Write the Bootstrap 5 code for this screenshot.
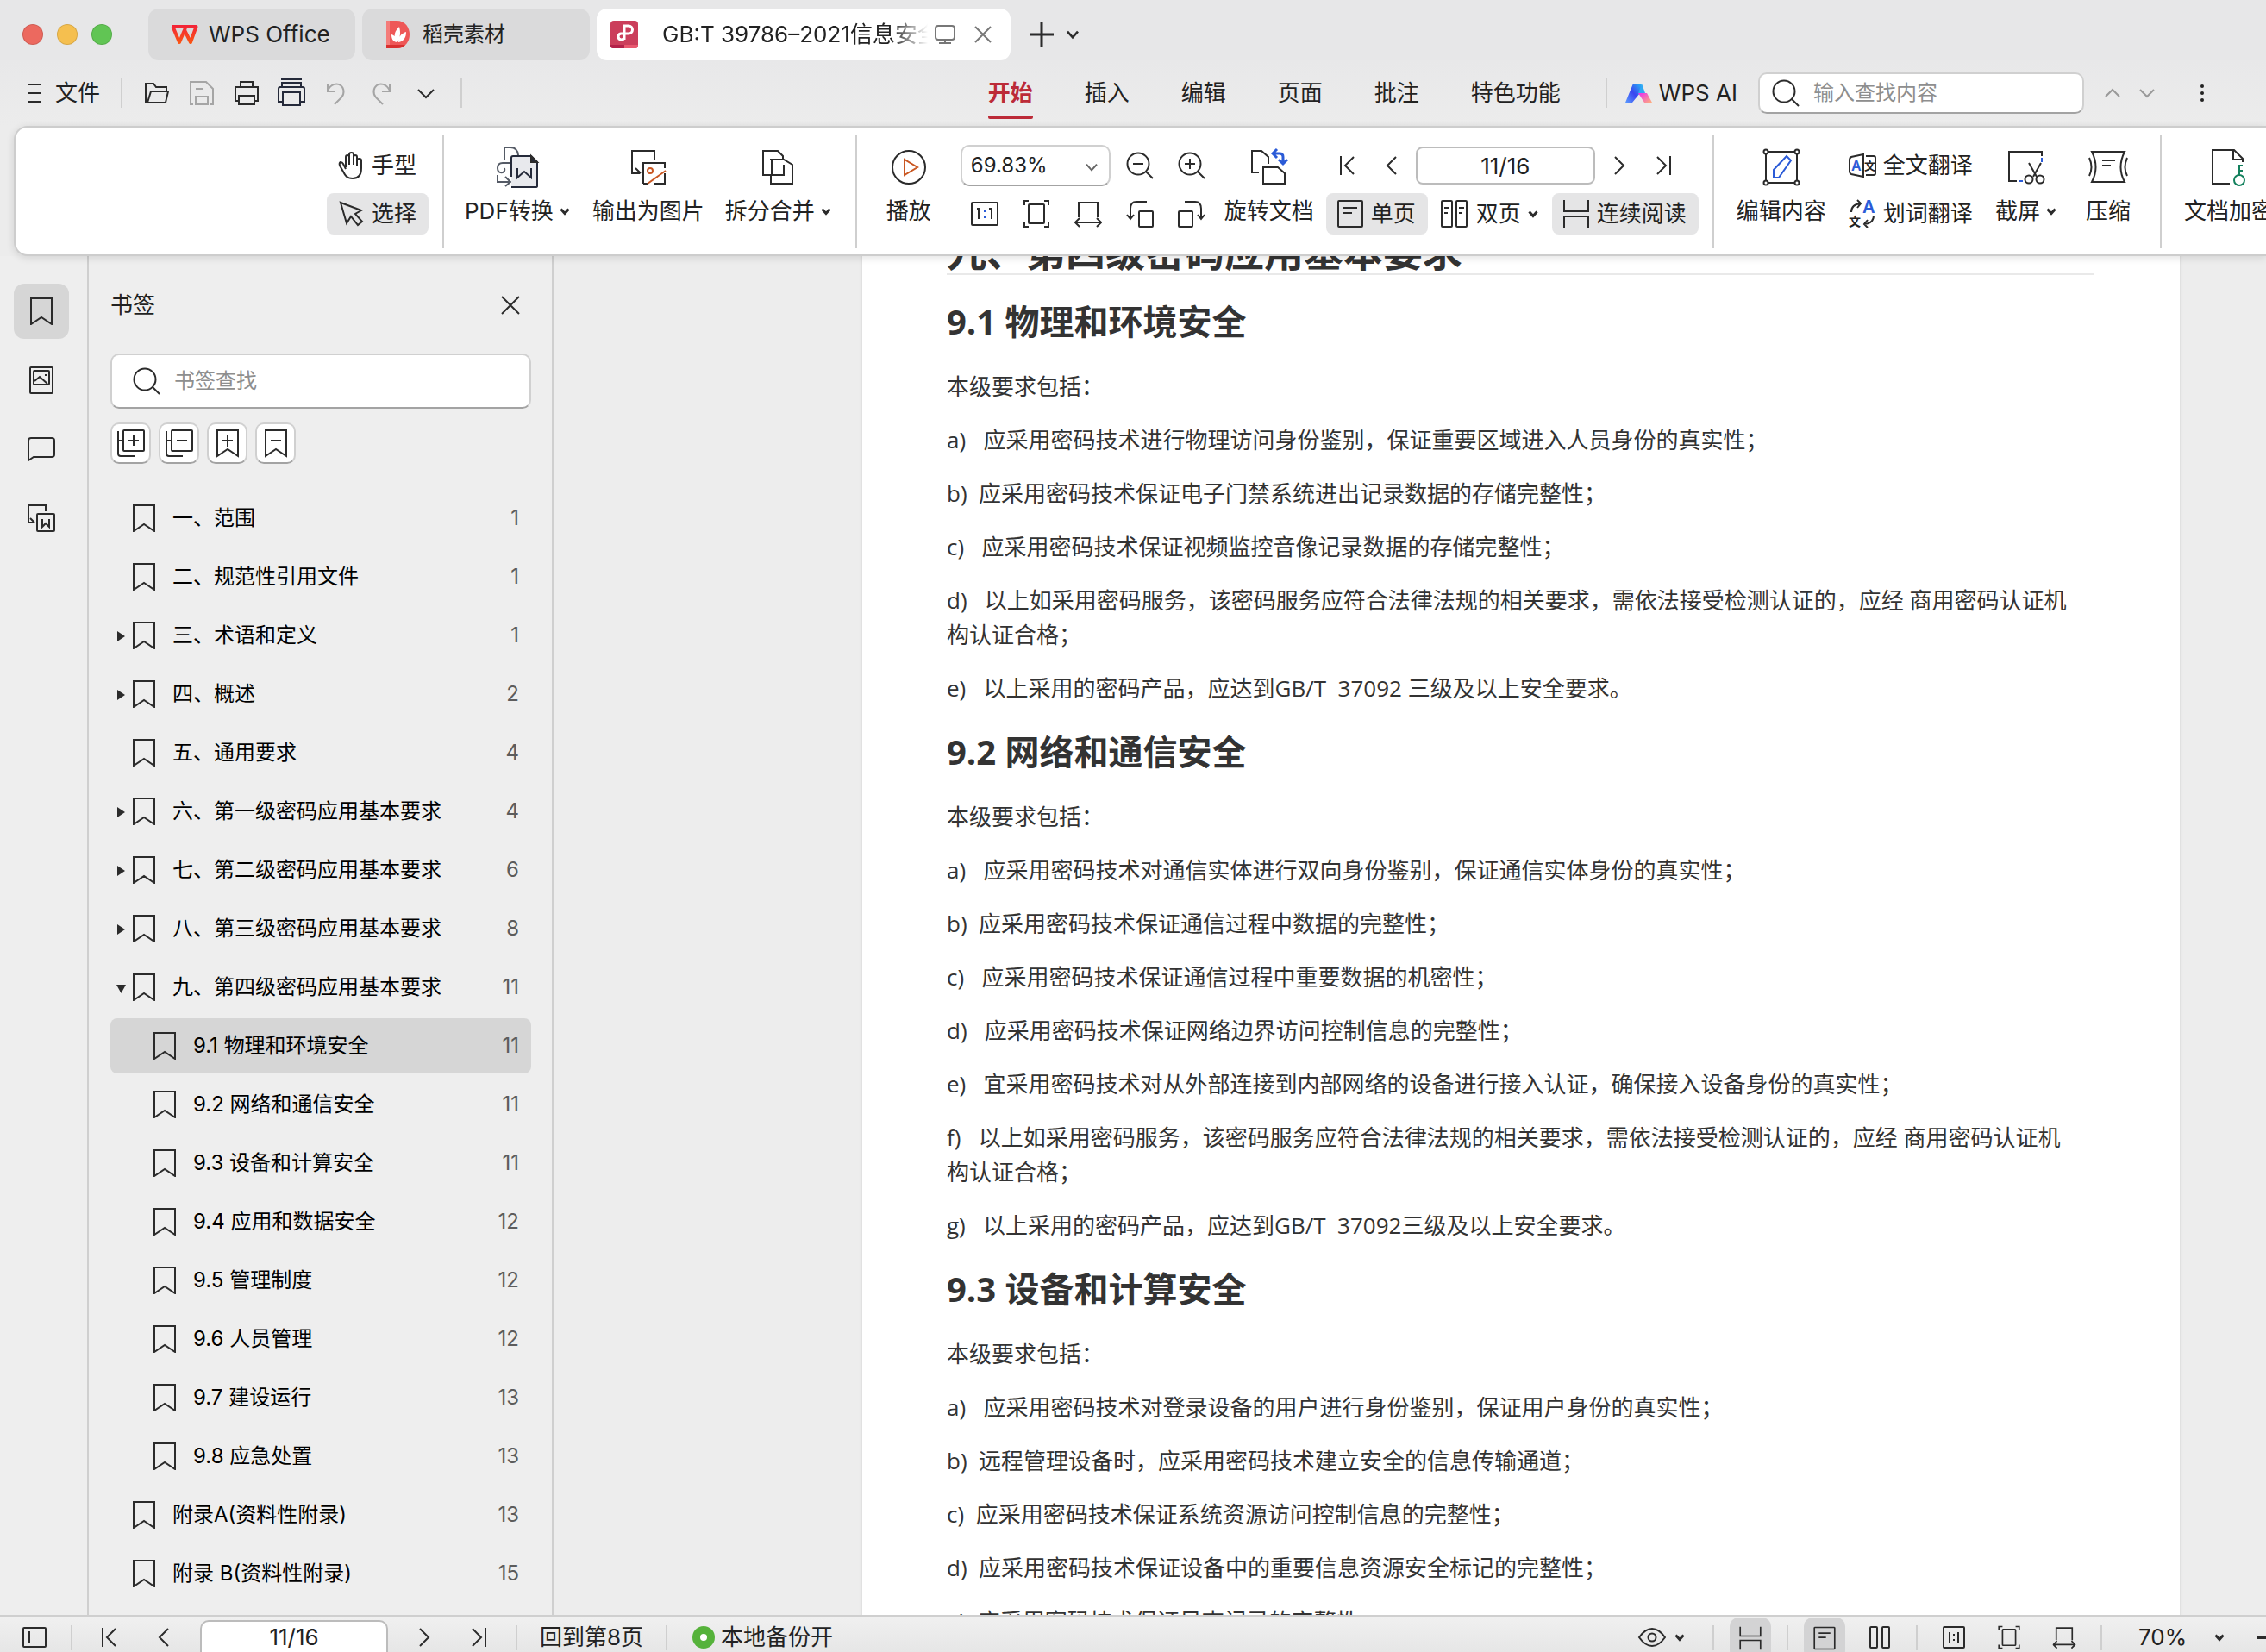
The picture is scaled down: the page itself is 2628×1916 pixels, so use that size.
<!DOCTYPE html>
<html lang="zh-CN">
<head>
<meta charset="utf-8">
<meta name="viewport" content="width=device-width, initial-scale=1">
<title>WPS Office - GB:T 39786–2021</title>
<link href="https://cdn.jsdelivr.net/npm/bootstrap@5.3.0/dist/css/bootstrap.min.css" rel="stylesheet">
<style>
  :root { --ui: Inter, "Noto Sans CJK SC", sans-serif; --ink: #222; --line: #cfcfcf; }
  body { font: 26px/32px var(--ui); color: var(--ink); background: #ececec; height: 100vh; }
  button, input, select { font: inherit; color: inherit; }
  button { background: none; border: 0; padding: 0; white-space: nowrap; }
  svg { display: block; flex: none; fill: none; stroke: #2b2b2b; stroke-width: 2; overflow: visible; }
  svg text { stroke: none; font-family: var(--ui); }
  .i12 { width: 12px; height: 12px; } .i32 { width: 32px; height: 32px; } .i48 { width: 48px; height: 48px; }
  .faded { stroke: #a5a5a5; }
  .bold-line { stroke-width: 3; }

  /* window tabs */
  .title-strip { padding: 10px 20px 0 26px; background: #e7e7e8; }
  .lights { gap: 16px; margin-right: 42px; }
  .light-dot { width: 24px; height: 24px; border-radius: 50%; border: 1px solid rgba(0,0,0,.12); }
  .win-tab { height: 60px; border-radius: 12px; background: #dadadb; padding: 0 16px 0 26px; margin-right: 8px; gap: 12px; text-align: left; }
  .win-tab.w-home { width: 240px; } .win-tab.w-docer { width: 264px; font-size: 24px; }
  .win-tab.current { width: 480px; background: #fff; padding: 0 16px; gap: 4px; }
  .tab-name { flex: 1; overflow: hidden; white-space: nowrap; margin-left: 24px; -webkit-mask-image: linear-gradient(90deg,#000 86%,transparent); mask-image: linear-gradient(90deg,#000 86%,transparent); }
  .tab-extra { gap: 12px; margin-left: 12px; }

  /* menu row */
  .menu-strip { height: 76px; padding-left: 24px; background: linear-gradient(#e8e8e9,#ececec); }
  .rule-v { width: 2px; background: var(--line); flex: none; }
  .menu-strip .rule-v { height: 34px; }
  .quick { gap: 20px; margin: 0 24px; }
  .menu-tabs { gap: 60px; margin-left: auto; }
  .menu-tabs a { color: var(--ink); text-decoration: none; line-height: 44px; border-bottom: 4px solid transparent; border-top: 4px solid transparent; border-radius: 2px; padding-bottom: 4px; margin-top: 4px; }
  .menu-tabs a.on { color: #bc2b38; font-weight: 700; border-bottom-color: #bc2b38; }
  .ai-group { margin: 0 24px 0 20px; gap: 8px; }
  .box-field { background: #fff; border: 2px solid #d0d0d0; border-bottom-color: #a3a3a3; border-radius: 10px; }
  .find-box { width: 378px; height: 48px; padding-left: 14px; gap: 16px; font-size: 24px; }
  .find-box input, .side-find input { border: 0; outline: 0; background: none; width: 100%; min-width: 0; padding: 0; }
  input::placeholder { color: #8e8e8e; opacity: 1; }
  .menu-end { gap: 8px; margin: 0 58px 0 17px; }

  /* ribbon */
  .ribbon { height: 151px; margin-left: 16px; padding: 20px 0 0 361px; background: #fff; border: 2px solid #cdcdcd; border-right: 0; border-radius: 16px 0 0 16px; box-shadow: 0 2px 10px rgba(0,0,0,.12); position: relative; z-index: 2; width: calc(100% - 16px); overflow: clip; overflow-clip-margin: 12px; }
  .ribbon > * { flex: none; }
  .ribbon .rule-v { height: 132px; margin-top: -12px; }
  .tool { height: 48px; gap: 8px; display: flex; align-items: center; border-radius: 8px; }
  .tool.pad { padding: 0 14px 0 12px; }
  .tool.on { background: #e5e5e6; }
  .big-tool { display: flex; flex-direction: column; align-items: center; gap: 11px; padding-top: 2px; height: 98px; }
  .big-tool span { display: flex; align-items: center; gap: 7px; }
  .stack-8 { display: flex; flex-direction: column; gap: 8px; }
  .row-28 { display: flex; gap: 28px; align-items: center; height: 48px; }
  .zoom-pick { position: relative; width: 174px; height: 48px; margin-right: -10px; }
  .zoom-pick select { appearance: none; width: 100%; height: 100%; padding: 0 10px; color: var(--ink); font-size: 24px; }
  .zoom-pick svg { position: absolute; right: 14px; top: 18px; pointer-events: none; }
  .page-no { text-align: center; border: 2px solid #bcbcbc; border-radius: 8px; background: #fff; padding: 0; }
  .gap-a { margin-left: 24px; } .gap-b { margin-left: 16px; } .gap-c { margin-left: 34px; } .gap-d { margin-left: 26px; }

  /* side */
  .rail { width: 103px; border-right: 2px solid var(--line); padding: 32px 0 0 16px; gap: 16px; background: #eee; }
  .rail button { width: 64px; height: 64px; border-radius: 12px; display: flex; align-items: center; justify-content: center; }
  .rail button.on, .mark-row.on { background: #d6d6d6; }
  .side { width: 539px; border-right: 2px solid var(--line); padding: 25px 24px 0 25px; background: #eee; }
  .side-head { height: 64px; margin-bottom: 24px; padding-right: 8px; }
  .side-find { height: 64px; padding-left: 24px; gap: 16px; font-size: 24px; margin-bottom: 16px; }
  .side-acts { gap: 9px; margin-bottom: 31px; }
  .side-acts button { width: 47px; height: 48px; display: flex; align-items: center; justify-content: center; background: #fff; }
  .marks { display: flex; flex-direction: column; gap: 4px; font-size: 24px; }
  .mark-row { height: 64px; border-radius: 8px; color: #000; text-decoration: none; display: flex; align-items: center; padding: 0 14px 0 8px; }
  .mark-row .arrow { width: 12px; height: 12px; margin-right: 3px; fill: #2b2b2b; stroke: none; }
  .mark-row .i32 { margin-right: 17px; }
  .mark-row.sub { padding-left: 47px; }
  .mark-row em { margin-left: auto; font-style: normal; color: #5c5c5c; }

  /* document */
  .viewer { background: #ededed; min-width: 0; }
  .sheet { width: 1528px; margin: -32px auto 0 358px; padding: 0 99px 0 98px; background: #fff; box-shadow: 0 0 4px rgba(0,0,0,.12); font: 26px/40px "Open Sans", "Noto Sans CJK SC", sans-serif; color: #333; }
  .sheet h1 { font-size: 46px; line-height: 52px; font-weight: 700; margin: 0 0 28px; border-bottom: 2px solid #e9e9e9; }
  .sheet h2 { font-size: 40px; line-height: 52px; font-weight: 700; margin: 28px 0 29px; }
  .sheet p { margin: 0 0 22px; }

  /* status */
  .status { height: 43px; border-top: 2px solid var(--line); background: linear-gradient(#f0f0f0,#e6e6e6); flex: none; overflow: hidden; position: relative; z-index: 1; }
  .status > * { flex: none; margin-top: 8px; }
  .status .rule-v { height: 29px; margin-top: 10px; }
  .status .page-no { width: 218px; height: 48px; margin-top: 4px; border-radius: 10px; line-height: 38px; padding-bottom: 10px; }
  .status .st-on { width: 48px; height: 48px; margin-top: 1px; padding: 7px 8px; border-radius: 10px; background: #d3d3d4; }
  .status select { appearance: none; border: 0; background: none; padding: 0; }
</style>
<script src="https://cdn.jsdelivr.net/npm/bootstrap@5.3.0/dist/js/bootstrap.bundle.min.js"></script>
</head>
<body class="d-flex flex-column overflow-hidden">

<svg width="0" height="0" class="position-absolute" aria-hidden="true">
  <symbol id="mark" viewBox="0 0 32 32"><path d="M4 1h24v30L16 23 4 31z"/></symbol>
  <symbol id="down" viewBox="0 0 12 12"><path d="M1.500 3.500 6 8.500l4.500-5"/></symbol>
  <symbol id="lens" viewBox="0 0 32 32"><circle cx="14" cy="14" r="12.500"/><path d="m23 23 8 8"/></symbol>
  <symbol id="first" viewBox="0 0 32 32"><path d="M9 5v22M24 6 14 16l10 10"/></symbol>
  <symbol id="prev" viewBox="0 0 32 32"><path d="M21 6 11 16l10 10"/></symbol>
  <symbol id="next" viewBox="0 0 32 32"><path d="m11 6 10 10-10 10"/></symbol>
  <symbol id="last" viewBox="0 0 32 32"><path d="M23 5v22M8 6l10 10L8 26"/></symbol>
  <symbol id="real" viewBox="0 0 32 32"><rect x="1" y="3" width="30" height="26" rx="1"/><path d="M7 10h2v12M21 10h3v12"/><path d="M16 11v3m0 4v3" stroke="#2b5bd7"/></symbol>
  <symbol id="fit" viewBox="0 0 32 32"><rect x="7" y="5" width="18" height="22" rx="1"/><path d="M2 6V1h5M25 1h5v5M30 26v5h-5M7 31H2v-5"/></symbol>
  <symbol id="wide" viewBox="0 0 32 32"><path d="M5 20V3h22v17M1 26h30M6 21l-5 5 5 5M26 21l5 5-5 5"/></symbol>
  <symbol id="single" viewBox="0 0 32 32"><rect x="2" y="1" width="28" height="30" rx="1"/><path d="M8 9h16M8 15h10"/></symbol>
  <symbol id="scroll" viewBox="0 0 32 32"><path d="M2 0v13h28V0M2 32V19h28v13"/></symbol>
</svg>

<header class="flex-shrink-0">
  <div class="title-strip d-flex align-items-center">
    <div class="lights d-flex">
      <span class="light-dot" style="background:#ec695f"></span><span class="light-dot" style="background:#f5bf4f"></span><span class="light-dot" style="background:#61c554"></span>
    </div>
    <button class="win-tab w-home d-flex align-items-center">
      <svg class="i32" viewBox="0 0 32 32"><defs><linearGradient id="wg" gradientUnits="userSpaceOnUse" x1="0" y1="4" x2="0" y2="28"><stop stop-color="#f2203a"/><stop offset="1" stop-color="#fb5a10"/></linearGradient></defs><path d="M2 7h27.500L23 25 16 11M2.500 7 10 25 17 8.500" stroke="url(#wg)" stroke-width="4" stroke-linejoin="round"/></svg>
      WPS Office</button>
    <button class="win-tab w-docer d-flex align-items-center">
      <svg class="i32" viewBox="0 0 32 32" style="stroke:none"><path d="M2 0h12c20 0 20 32 0 32H2z" fill="#ee5757"/><path d="M2 28h22c-3 3-6 4-10 4H2z" fill="#d9302f"/><path d="M2 0h4v28H2z" fill="#f47c7a"/><path d="M15 25c-6-7-3-13 2-18 2 8 1 12-2 18zM16 25c0-6 3-10 9-12 0 7-3 11-9 12zM14 25c-5-1-6-5-6-9 4 1 6 4 6 9z" fill="#fff"/></svg>
      稻壳素材</button>
    <button class="win-tab current d-flex align-items-center">
      <svg class="i32" viewBox="0 0 32 32"><rect width="32" height="32" rx="4" fill="#cb3e5b" stroke="none"/><path d="M0 28h16v4H3q-3 0-3-3z" fill="#b32149" stroke="none"/><path d="M16 28h16q0 4-3 4H16z" fill="#e9586f" stroke="none"/><path d="M16 22V6h5a4 4 0 0 1 0 9h-9a3.500 3.500 0 1 0 4 4" stroke="#fff" stroke-width="3"/></svg>
      <span class="tab-name">GB:T 39786–2021信息安全</span>
      <svg class="i32" viewBox="0 0 32 32" style="stroke:#777"><rect x="5" y="6" width="22" height="16" rx="3"/><path d="M16 22v4M9 26h14"/></svg>
      <svg class="i32 ms-2" viewBox="0 0 32 32" style="stroke:#777"><path d="m7 7 18 18M25 7 7 25"/></svg>
    </button>
    <div class="tab-extra d-flex align-items-center">
      <button aria-label="新建"><svg class="i32" style="stroke-width:3" viewBox="0 0 32 32"><path d="M16 2v28M2 16h28"/></svg></button>
      <button aria-label="更多标签"><svg style="width:16px;height:16px"><use href="#down"/></svg></button>
    </div>
  </div>

  <div class="menu-strip d-flex align-items-center">
    <button class="d-flex align-items-center gap-2"><svg class="i32" viewBox="0 0 32 32"><path d="M8 6h16M8 16h16M8 26h16"/></svg>文件</button>
    <div class="rule-v ms-4"></div>
    <div class="quick d-flex align-items-center">
      <button aria-label="打开"><svg class="i32" viewBox="0 0 32 32"><path d="M3 27V5h9l3 4h12v5M3 27h23l3-13H9L5 27"/></svg></button>
      <button aria-label="保存"><svg class="i32 faded" viewBox="0 0 32 32"><path d="M6 29H3V3h18l8 8v18h-3M9 29V20h14v9zM9 11h8"/></svg></button>
      <button aria-label="打印"><svg class="i32" viewBox="0 0 32 32"><path d="M8 25H3V9h26v16h-5M9 9V3h14v6M7 19h18v10H7z"/></svg></button>
      <button aria-label="快速打印"><svg class="i32" style="stroke:#252a3a" viewBox="0 0 32 32"><path d="M4 0h24M5 9V4h22v5M6 26H1V11q0-2 2-2h26q2 0 2 2v15h-5M6 15h20v15H6z"/></svg></button>
      <button aria-label="撤销"><svg class="i32 faded" viewBox="0 0 32 32"><path d="M6 5v9h9M6 13c4-8 11-9 15-6s5 9 1 14l-8 8"/></svg></button>
      <button aria-label="恢复"><svg class="i32 faded" viewBox="0 0 32 32"><path d="M26 5v9h-9M26 13C22 5 15 4 11 7s-5 9-1 14l8 8"/></svg></button>
      <button aria-label="更多"><svg class="i32" viewBox="0 0 32 32"><path d="m7 12 9 9 9-9"/></svg></button>
    </div>
    <div class="rule-v"></div>
    <nav class="menu-tabs d-flex">
      <a class="on" href="#">开始</a><a href="#">插入</a><a href="#">编辑</a><a href="#">页面</a><a href="#">批注</a><a href="#">特色功能</a>
    </nav>
    <div class="rule-v" style="margin-left:52px"></div>
    <button class="ai-group d-flex align-items-center">
      <svg class="i32" viewBox="0 0 32 32" style="stroke:none"><defs><linearGradient id="ga" x1="1" x2="0" y2="1"><stop stop-color="#25b9f5"/><stop offset=".5" stop-color="#3a45f0"/><stop offset="1" stop-color="#5b9cff"/></linearGradient><linearGradient id="gb" x2="1" y2="1"><stop stop-color="#e92df0"/><stop offset="1" stop-color="#ffb27a"/></linearGradient></defs><path d="M10 5h10l-2 11-9 11H1z" fill="url(#ga)"/><path d="M16 16h10l6 11h-9z" fill="url(#gb)"/><path d="M20 5l4 11h-8z" fill="#2fa8f3"/></svg>
      WPS AI</button>
    <label class="box-field find-box d-flex align-items-center"><svg class="i32"><use href="#lens"/></svg><input type="text" placeholder="输入查找内容" aria-label="输入查找内容"></label>
    <div class="menu-end d-flex align-items-center">
      <button aria-label="上一个"><svg class="i32" style="stroke:#999" viewBox="0 0 32 32"><path d="m8 20 8-8 8 8"/></svg></button>
      <button aria-label="下一个"><svg class="i32" style="stroke:#999" viewBox="0 0 32 32"><path d="m8 12 8 8 8-8"/></svg></button>
      <button class="ms-4" aria-label="菜单"><svg class="i32" style="stroke:none;fill:#222" viewBox="0 0 32 32"><circle cx="16" cy="8" r="2"/><circle cx="16" cy="16" r="2"/><circle cx="16" cy="24" r="2"/></svg></button>
    </div>
  </div>

  <div class="ribbon d-flex align-items-start">
    <div class="stack-8">
      <button class="tool pad"><svg class="i32" viewBox="0 0 32 32"><path d="M10 18V6q0-2 2-2t2 2v9V3q0-2 2.500-2T19 3v12V6q0-2 2-2t2 2v11-7q0-2 2.500-2T28 10v9q0 12-10 12C11 31 9 27 7 23L3 16q-1-3 1-4 2 0 3 2l3 6"/></svg>手型</button>
      <button class="tool pad on"><svg class="i32" viewBox="0 0 32 32"><path d="m4 3 7 24 5-8 8 10 5-4-8-9 7-4z"/></svg>选择</button>
    </div>
    <div class="rule-v gap-b"></div>
    <button class="big-tool gap-a"><svg class="i48" viewBox="0 0 48 48"><path d="M9 16V1h7q8 0 9 9M17 19H7q-6 0-6 6t6 5q3-1 2-5M1 33v8h14M10 35l6 6-6 5" stroke="#555b66"/><path d="M17 11h23l7 7v28q0 1-2 1H17z" fill="#e8e9ed" stroke="none"/><path d="M17 35V13q0-2 2-2h21l7 7v28q0 1-2 1H17" stroke="#252a3a"/><path d="M40 11v7h7z" fill="#252a3a"/><path d="M24 25v11l8-7 8 7V25" stroke="#252a3a"/></svg><span>PDF转换<svg class="i12 bold-line"><use href="#down"/></svg></span></button>
    <button class="big-tool gap-d"><svg class="i48" viewBox="0 0 48 48"><path d="M31 16V5H5v26h9M9 25l6 6M18 43V19h25v6M43 31v12H30M18 43h5"/><circle cx="26" cy="28" r="3" stroke="#c95722"/><path d="m23 43 21-15" stroke="#c95722"/></svg><span>输出为图片</span></button>
    <button class="big-tool gap-a"><svg class="i48" viewBox="0 0 48 48"><path d="M16 33H7V5h17l6 6v5M16 16v-1h15l10 6v22H16V33h15V21M24 15h-7v18"/></svg><span>拆分合并<svg class="i12 bold-line"><use href="#down"/></svg></span></button>
    <div class="rule-v" style="margin-left:28px"></div>
    <button class="big-tool gap-c"><svg class="i48" viewBox="0 0 48 48"><circle cx="24" cy="24" r="19"/><path d="M19 15v18l15-9z" stroke="#c95722"/></svg><span>播放</span></button>
    <div class="stack-8 gap-c">
      <div class="row-28">
        <div class="zoom-pick"><select class="box-field" aria-label="缩放"><option>69.83%</option></select><svg style="width:16px;height:16px;stroke-width:1.500;stroke:#666"><use href="#down"/></svg></div>
        <svg class="i32" viewBox="0 0 32 32"><circle cx="14" cy="14" r="12.500"/><path d="m23 23 8 8M8 14h12"/></svg>
        <svg class="i32" viewBox="0 0 32 32"><circle cx="14" cy="14" r="12.500"/><path d="m23 23 8 8M8 14h12M14 8v12"/></svg>
      </div>
      <div class="row-28" style="padding-left:12px">
        <button aria-label="实际大小"><svg class="i32"><use href="#real"/></svg></button>
        <button aria-label="适合页面"><svg class="i32"><use href="#fit"/></svg></button>
        <button aria-label="适合宽度"><svg class="i32"><use href="#wide"/></svg></button>
        <button aria-label="左转"><svg class="i32" viewBox="0 0 32 32"><rect x="15" y="13" width="16" height="18" rx="1"/><path d="M24 2H12q-7 0-7 8v12M1 17l4 5 4-5"/></svg></button>
        <button aria-label="右转"><svg class="i32" viewBox="0 0 32 32"><rect x="1" y="13" width="16" height="18" rx="1"/><path d="M8 2h12q7 0 7 8v12M23 17l4 5 4-5"/></svg></button>
      </div>
    </div>
    <button class="big-tool" style="margin-left:22px"><svg class="i48" viewBox="0 0 48 48"><path d="M12 30H4V5h11l8 7v8M17 43V24h17l8 7v12z"/><path d="M33 3l-5 5 5 5M28 8h8q4 0 4 4v8M35 15l5 5 5-5" stroke="#2b5bd7" stroke-width="3"/></svg><span>旋转文档</span></button>
    <div class="stack-8" style="margin-left:14px">
      <div class="d-flex align-items-center" style="height:48px;gap:20px;padding-left:8px">
        <button aria-label="首页"><svg class="i32"><use href="#first"/></svg></button>
        <button aria-label="上一页"><svg class="i32"><use href="#prev"/></svg></button>
        <input class="page-no" style="width:208px;height:44px;margin:0 -8px" value="11/16" aria-label="页码">
        <button aria-label="下一页"><svg class="i32"><use href="#next"/></svg></button>
        <button aria-label="末页"><svg class="i32"><use href="#last"/></svg></button>
      </div>
      <div class="d-flex gap-3">
        <button class="tool pad on"><svg class="i32"><use href="#single"/></svg>单页</button>
        <button class="tool"><svg class="i32" viewBox="0 0 32 32"><rect x="0" y="1" width="12" height="30" rx="1"/><rect x="17" y="1" width="12" height="30" rx="1"/><path d="M3 9h6M3 15h4M20 9h6M20 15h4"/></svg>双页<svg class="i12 bold-line"><use href="#down"/></svg></button>
        <button class="tool pad on"><svg class="i32"><use href="#scroll"/></svg>连续阅读</button>
      </div>
    </div>
    <div class="rule-v gap-b"></div>
    <button class="big-tool gap-d"><svg class="i48" viewBox="0 0 48 48"><path d="M9 6h30M9 42h30M6 9v30M42 9v30"/><path d="M15 36v-9L30 11l5 5-14 20z" stroke="#2b5bd7"/><g fill="#fff"><circle cx="6" cy="6" r="2.500"/><circle cx="42" cy="6" r="2.500"/><circle cx="6" cy="42" r="2.500"/><circle cx="42" cy="42" r="2.500"/></g></svg><span>编辑内容</span></button>
    <div class="stack-8 gap-d">
      <button class="tool"><svg class="i32" viewBox="0 0 32 32"><path d="M17 3v26L3 26q-2-1-2-3V9q0-2 2-3zM20 5h9q2 0 2 2v18q0 2-2 2h-9"/><text x="3" y="22" font-size="16" font-weight="600" fill="#2b5bd7">A</text><text x="18" y="21" font-size="13" font-weight="700" fill="#222">文</text></svg>全文翻译</button>
      <button class="tool"><svg class="i32" viewBox="0 0 32 32"><path d="M3 14q0-9 11-10M10 0l4 4-4 5M29 18q0 9-11 10M22 23l-4 5 4 4"/><text x="16" y="15" font-size="20" font-weight="600" fill="#2b5bd7">A</text><text x="0" y="30" font-size="14" font-weight="700" fill="#222">文</text></svg>划词翻译</button>
    </div>
    <button class="big-tool gap-d"><svg class="i48" viewBox="0 0 48 48"><path d="M14 40H5V6h38v5"/><path d="M43 13v5M16 40h5" stroke="#2b5bd7"/><path d="m28 19 9 16M42 19l-9 16"/><circle cx="28" cy="38" r="4.500"/><circle cx="41" cy="38" r="4.500"/></svg><span>截屏<svg class="i12 bold-line"><use href="#down"/></svg></span></button>
    <button class="big-tool gap-c"><svg class="i48" viewBox="0 0 48 48"><path d="M5 6h38q-9 18 0 35H5q9-17 0-35zM17 16h15M17 22h10M2 13q5 11 0 21M46 13q-5 11 0 21"/></svg><span>压缩</span></button>
    <div class="rule-v gap-c"></div>
    <button class="big-tool gap-d"><svg class="i48" viewBox="0 0 48 48"><path d="M25 43H5V4h25l10 10v4M29 4v11h11"/><g stroke="#12805c"><circle cx="36" cy="39" r="6"/><path d="M36 33V22h4M36 28h4"/></g></svg><span>文档加密</span></button>
  </div>
</header>

<main class="d-flex flex-grow-1 overflow-hidden" style="min-height:0">
  <nav class="rail d-flex flex-column flex-shrink-0">
    <button class="on" aria-label="书签"><svg class="i32"><use href="#mark"/></svg></button>
    <button aria-label="缩略图"><svg class="i32" viewBox="0 0 32 32"><rect x="3" y="1" width="26" height="30" rx="1"/><rect x="7" y="5" width="18" height="16" rx="1"/><path d="m8 17 6-5 9 8M20 10h2"/></svg></button>
    <button aria-label="批注"><svg class="i32" viewBox="0 0 32 32"><path d="M1 29V6q0-3 3-3h24q3 0 3 3v16q0 3-3 3H7z"/></svg></button>
    <button aria-label="转换"><svg class="i32" viewBox="0 0 32 32"><path d="M21 8V1H1v20h7M3 16l5 5"/><rect x="11" y="11" width="20" height="20" rx="1"/><path d="M17 17v9l4-4 4 4v-9"/></svg></button>
  </nav>
  <aside class="side flex-shrink-0">
    <div class="side-head d-flex align-items-center justify-content-between">书签
      <button aria-label="关闭"><svg class="i32" viewBox="0 0 32 32"><path d="m6 6 20 20M26 6 6 26"/></svg></button></div>
    <label class="box-field side-find d-flex align-items-center"><svg class="i32"><use href="#lens"/></svg><input type="text" placeholder="书签查找" aria-label="书签查找"></label>
    <div class="side-acts d-flex">
      <button class="box-field" aria-label="展开"><svg class="i32" viewBox="0 0 32 32"><rect x="7" y="1" width="24" height="24" rx="1"/><path d="M1 2v26q0 3 3 3h16M1 13h6M19 7v12M13 13h12"/></svg></button>
      <button class="box-field" aria-label="收起"><svg class="i32" viewBox="0 0 32 32"><rect x="7" y="1" width="24" height="24" rx="1"/><path d="M1 2v26q0 3 3 3h16M1 13h6M13 13h12"/></svg></button>
      <button class="box-field" aria-label="添加书签"><svg class="i32" viewBox="0 0 32 32"><path d="M4 1h24v30L16 23 4 31zM16 7v13M10 13h12"/></svg></button>
      <button class="box-field" aria-label="删除书签"><svg class="i32" viewBox="0 0 32 32"><path d="M4 1h24v30L16 23 4 31zM10 13h12"/></svg></button>
    </div>
    <div class="marks">
      <a class="mark-row" href="#"><svg class="arrow"></svg><svg class="i32"><use href="#mark"/></svg>一、范围<em>1</em></a>
      <a class="mark-row" href="#"><svg class="arrow"></svg><svg class="i32"><use href="#mark"/></svg>二、规范性引用文件<em>1</em></a>
      <a class="mark-row" href="#"><svg class="arrow"><path d="M0 1v12l9-6z"/></svg><svg class="i32"><use href="#mark"/></svg>三、术语和定义<em>1</em></a>
      <a class="mark-row" href="#"><svg class="arrow"><path d="M0 1v12l9-6z"/></svg><svg class="i32"><use href="#mark"/></svg>四、概述<em>2</em></a>
      <a class="mark-row" href="#"><svg class="arrow"></svg><svg class="i32"><use href="#mark"/></svg>五、通用要求<em>4</em></a>
      <a class="mark-row" href="#"><svg class="arrow"><path d="M0 1v12l9-6z"/></svg><svg class="i32"><use href="#mark"/></svg>六、第一级密码应用基本要求<em>4</em></a>
      <a class="mark-row" href="#"><svg class="arrow"><path d="M0 1v12l9-6z"/></svg><svg class="i32"><use href="#mark"/></svg>七、第二级密码应用基本要求<em>6</em></a>
      <a class="mark-row" href="#"><svg class="arrow"><path d="M0 1v12l9-6z"/></svg><svg class="i32"><use href="#mark"/></svg>八、第三级密码应用基本要求<em>8</em></a>
      <a class="mark-row" href="#"><svg class="arrow"><path d="M-1 3h11L4.500 13z"/></svg><svg class="i32"><use href="#mark"/></svg>九、第四级密码应用基本要求<em>11</em></a>
      <a class="mark-row sub on" href="#"><svg class="i32"><use href="#mark"/></svg>9.1 物理和环境安全<em>11</em></a>
      <a class="mark-row sub" href="#"><svg class="i32"><use href="#mark"/></svg>9.2 网络和通信安全<em>11</em></a>
      <a class="mark-row sub" href="#"><svg class="i32"><use href="#mark"/></svg>9.3 设备和计算安全<em>11</em></a>
      <a class="mark-row sub" href="#"><svg class="i32"><use href="#mark"/></svg>9.4 应用和数据安全<em>12</em></a>
      <a class="mark-row sub" href="#"><svg class="i32"><use href="#mark"/></svg>9.5 管理制度<em>12</em></a>
      <a class="mark-row sub" href="#"><svg class="i32"><use href="#mark"/></svg>9.6 人员管理<em>12</em></a>
      <a class="mark-row sub" href="#"><svg class="i32"><use href="#mark"/></svg>9.7 建设运行<em>13</em></a>
      <a class="mark-row sub" href="#"><svg class="i32"><use href="#mark"/></svg>9.8 应急处置<em>13</em></a>
      <a class="mark-row" href="#"><svg class="arrow"></svg><svg class="i32"><use href="#mark"/></svg>附录A(资料性附录)<em>13</em></a>
      <a class="mark-row" href="#"><svg class="arrow"></svg><svg class="i32"><use href="#mark"/></svg>附录 B(资料性附录)<em>15</em></a>
    </div>
  </aside>
  <section class="viewer flex-grow-1 overflow-hidden">
    <article class="sheet">
      <h1>九、第四级密码应用基本要求</h1>
      <h2>9.1 物理和环境安全</h2>
      <p>本级要求包括：</p>
      <p>a)&nbsp;&nbsp; 应采用密码技术进行物理访问身份鉴别，保证重要区域进入人员身份的真实性；</p>
      <p>b)&nbsp; 应采用密码技术保证电子门禁系统进出记录数据的存储完整性；</p>
      <p>c)&nbsp;&nbsp; 应采用密码技术保证视频监控音像记录数据的存储完整性；</p>
      <p>d)&nbsp;&nbsp; 以上如采用密码服务，该密码服务应符合法律法规的相关要求，需依法接受检测认证的，应经 商用密码认证机<br>构认证合格；</p>
      <p>e)&nbsp;&nbsp; 以上采用的密码产品，应达到GB/T&nbsp; 37092 三级及以上安全要求。</p>
      <h2>9.2 网络和通信安全</h2>
      <p>本级要求包括：</p>
      <p>a)&nbsp;&nbsp; 应采用密码技术对通信实体进行双向身份鉴别，保证通信实体身份的真实性；</p>
      <p>b)&nbsp; 应采用密码技术保证通信过程中数据的完整性；</p>
      <p>c)&nbsp;&nbsp; 应采用密码技术保证通信过程中重要数据的机密性；</p>
      <p>d)&nbsp;&nbsp; 应采用密码技术保证网络边界访问控制信息的完整性；</p>
      <p>e)&nbsp;&nbsp; 宜采用密码技术对从外部连接到内部网络的设备进行接入认证，确保接入设备身份的真实性；</p>
      <p>f)&nbsp;&nbsp; 以上如采用密码服务，该密码服务应符合法律法规的相关要求，需依法接受检测认证的，应经 商用密码认证机<br>构认证合格；</p>
      <p>g)&nbsp;&nbsp; 以上采用的密码产品，应达到GB/T&nbsp; 37092三级及以上安全要求。</p>
      <h2>9.3 设备和计算安全</h2>
      <p>本级要求包括：</p>
      <p>a)&nbsp;&nbsp; 应采用密码技术对登录设备的用户进行身份鉴别，保证用户身份的真实性；</p>
      <p>b)&nbsp; 远程管理设备时，应采用密码技术建立安全的信息传输通道；</p>
      <p>c)&nbsp; 应采用密码技术保证系统资源访问控制信息的完整性；</p>
      <p>d)&nbsp; 应采用密码技术保证设备中的重要信息资源安全标记的完整性；</p>
      <p>e)&nbsp; 应采用密码技术保证日志记录的完整性；</p>
    </article>
  </section>
</main>

<footer class="status d-flex align-items-start">
  <button style="margin-left:24px" aria-label="侧栏"><svg class="i32" viewBox="0 0 32 32"><rect x="3" y="5" width="26" height="22" rx="1"/><path d="M10 9v14"/></svg></button>
  <div class="rule-v" style="margin-left:26px"></div>
  <button style="margin-left:26px" aria-label="首页"><svg class="i32"><use href="#first"/></svg></button>
  <button style="margin-left:32px" aria-label="上一页"><svg class="i32"><use href="#prev"/></svg></button>
  <input class="page-no" style="margin-left:26px" value="11/16" aria-label="页码">
  <button style="margin-left:26px" aria-label="下一页"><svg class="i32"><use href="#next"/></svg></button>
  <button style="margin-left:32px" aria-label="末页"><svg class="i32"><use href="#last"/></svg></button>
  <div class="rule-v" style="margin-left:26px"></div>
  <button style="margin-left:26px">回到第8页</button>
  <div class="rule-v" style="margin-left:26px"></div>
  <button class="d-flex align-items-center" style="margin-left:26px;gap:4px"><svg class="i32" viewBox="0 0 32 32" style="stroke:none"><circle cx="16" cy="16" r="13" fill="#55b23a"/><circle cx="16" cy="16" r="4" fill="#fff"/></svg>本地备份开</button>
  <button class="ms-auto d-flex align-items-center" style="gap:10px" aria-label="视图"><svg class="i32" viewBox="0 0 32 32"><path d="M1 16Q8 6 16 6t15 10q-7 10-15 10T1 16z"/><circle cx="16" cy="16" r="4.500"/></svg><svg class="i12 bold-line"><use href="#down"/></svg></button>
  <div class="rule-v" style="margin-left:32px"></div>
  <button class="st-on" style="margin-left:18px" aria-label="连续"><svg class="i32" viewBox="-3 -3 38 38"><use href="#scroll" width="32" height="32"/></svg></button>
  <div class="rule-v" style="margin-left:18px"></div>
  <button class="st-on" style="margin-left:18px" aria-label="单页"><svg class="i32" viewBox="-3 -3 38 38"><use href="#single" width="32" height="32"/></svg></button>
  <button style="margin-left:24px" aria-label="双页"><svg class="i32" viewBox="0 0 32 32"><rect x="5" y="4" width="8" height="24" rx="1"/><rect x="19" y="4" width="8" height="24" rx="1"/></svg></button>
  <div class="rule-v" style="margin-left:26px"></div>
  <button style="margin-left:26px" aria-label="实际大小"><svg class="i32" viewBox="0 0 32 32"><rect x="4" y="4" width="24" height="24" rx="1"/><path d="M11 10v12M21 10v12M16 12v2m0 4v2"/></svg></button>
  <button style="margin-left:32px" aria-label="适合页面"><svg class="i32" viewBox="-3 -3 38 38"><use href="#fit" width="32" height="32"/></svg></button>
  <button style="margin-left:32px" aria-label="适合宽度"><svg class="i32" viewBox="-3 -3 38 38"><use href="#wide" width="32" height="32"/></svg></button>
  <div class="rule-v" style="margin-left:26px"></div>
  <select style="margin-left:42px;width:88px" aria-label="显示比例"><option>70%</option></select>
  <svg class="i12 bold-line" style="margin-top:18px"><use href="#down"/></svg>
  <button style="margin-left:36px;height:32px" aria-label="缩小"><svg style="width:12px;height:12px;stroke-width:4"><path d="M1 6h14"/></svg></button>
</footer>
</body>
</html>
